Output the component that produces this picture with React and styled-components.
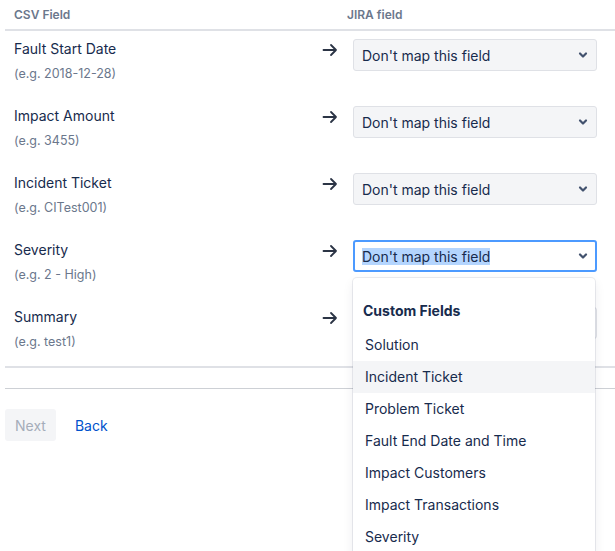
import styled, { createGlobalStyle } from "styled-components"

const GlobalStyle = createGlobalStyle`
    html, body {
        margin: 0;
        padding: 0;
        overflow: hidden;
        background: #fff;
    }
    body {
        font-family: Inter, "Noto Sans", sans-serif;
        color: #172b4d;
    }
`

const Page = styled.div`
    width: 610px;
    margin-left: 5px;
    height: 551px;
`

const HeaderRow = styled.div`
    display: grid;
    grid-template-columns: 333px 1fr;
    height: 29px;
    align-items: center;
    padding-left: 9px;
    border-bottom: 2px solid #dfe1e6;
`

const HeadCell = styled.div`
    font-size: 12px;
    font-weight: 600;
    color: #6b778c;
`

const Row = styled.div`
    display: grid;
    grid-template-columns: 308px 31px 244px;
    padding: 8px 0 0 9px;
    height: 59px;
`

const FieldName = styled.div`
    font-size: 14px;
    line-height: 20px;
`

const Hint = styled.div`
    font-size: 12.5px;
    line-height: 16px;
    color: #6b778c;
    margin-top: 7px;
`

const ArrowWrap = styled.div`
    padding-top: 2px;
    color: #2b3445;
`

const Cell = styled.div`
    position: relative;
`

const SelectBox = styled.div`
    box-sizing: border-box;
    height: 32px;
    display: flex;
    align-items: center;
    justify-content: space-between;
    border-radius: 3px;
    font-size: 14px;
    background: ${p => (p.$focused ? "#fff" : "#f4f5f7")};
    border: ${p => (p.$focused ? "2px solid #4c9aff" : "1px solid #dfe1e6")};
    padding: 0 ${p => (p.$focused ? "7px" : "8px")};
`

const Selected = styled.span`
    background: ${p => (p.$hl ? "#b4d5fe" : "transparent")};
`

const Menu = styled.div`
    position: absolute;
    top: 38px;
    left: 0;
    width: 242px;
    height: 300px;
    overflow: hidden;
    background: #fff;
    border-radius: 4px;
    box-shadow: 0 0 0 1px rgba(9, 30, 66, 0.08), 0 4px 11px rgba(9, 30, 66, 0.08);
    padding-top: 22px;
    box-sizing: border-box;
    z-index: 5;
`

const GroupHeading = styled.div`
    font-size: 14px;
    font-weight: 700;
    line-height: 22px;
    padding-left: 10px;
    margin-bottom: 7px;
`

const Option = styled.div`
    height: 32px;
    line-height: 32px;
    padding-left: 12px;
    font-size: 14px;
    background: ${p => (p.$active ? "#f4f5f7" : "transparent")};
`

const Divider = styled.div`
    border-top: 2px solid #dfe1e6;
`

const Footer = styled.div`
    margin-top: 20px;
    border-top: 1px solid #cdd0d5;
    padding-top: 20px;
    display: flex;
    align-items: center;
    gap: 9px;
`

const Button = styled.button`
    font-family: inherit;
    font-size: 14px;
    height: 32px;
    padding: 0 10px;
    border: none;
    border-radius: 3px;
    background: ${p => (p.$link ? "transparent" : "#f4f5f7")};
    color: ${p => (p.$link ? "#0052cc" : "#a5adba")};
`

function Arrow() {
    return (
        <svg width="16" height="14" viewBox="0 0 16 14" fill="none" stroke="currentColor" strokeWidth="1.8" strokeLinecap="round" strokeLinejoin="round">
            <path d="M1.5 7h12.5M9 2l5 5-5 5" />
        </svg>
    )
}

function Chevron() {
    return (
        <svg width="10" height="8" viewBox="0 0 10 8" fill="none" stroke="#42526e" strokeWidth="2.2" strokeLinecap="round" strokeLinejoin="round">
            <path d="M2 2.5l3 3 3-3" />
        </svg>
    )
}

const fields = [
    { name: "Fault Start Date", example: "2018-12-28" },
    { name: "Impact Amount", example: "3455" },
    { name: "Incident Ticket", example: "CITest001" },
    { name: "Severity", example: "2 - High", open: true },
    { name: "Summary", example: "test1" },
]

const options = [
    "Solution",
    "Incident Ticket",
    "Problem Ticket",
    "Fault End Date and Time",
    "Impact Customers",
    "Impact Transactions",
    "Severity",
]

function App() {
    return (
        <>
            <GlobalStyle />
            <Page>
                <HeaderRow>
                    <HeadCell>CSV Field</HeadCell>
                    <HeadCell>JIRA field</HeadCell>
                </HeaderRow>
                {fields.map(f => (
                    <Row key={f.name}>
                        <div>
                            <FieldName>{f.name}</FieldName>
                            <Hint>(e.g. {f.example})</Hint>
                        </div>
                        <ArrowWrap>
                            <Arrow />
                        </ArrowWrap>
                        <Cell>
                            <SelectBox $focused={f.open}>
                                <Selected $hl={f.open}>Don't map this field</Selected>
                                <Chevron />
                            </SelectBox>
                            {f.open && (
                                <Menu>
                                    <GroupHeading>Custom Fields</GroupHeading>
                                    {options.map((o, i) => (
                                        <Option key={o} $active={i === 1}>{o}</Option>
                                    ))}
                                </Menu>
                            )}
                        </Cell>
                    </Row>
                ))}
                <Divider />
                <Footer>
                    <Button>Next</Button>
                    <Button $link>Back</Button>
                </Footer>
            </Page>
        </>
    )
}

export default App
